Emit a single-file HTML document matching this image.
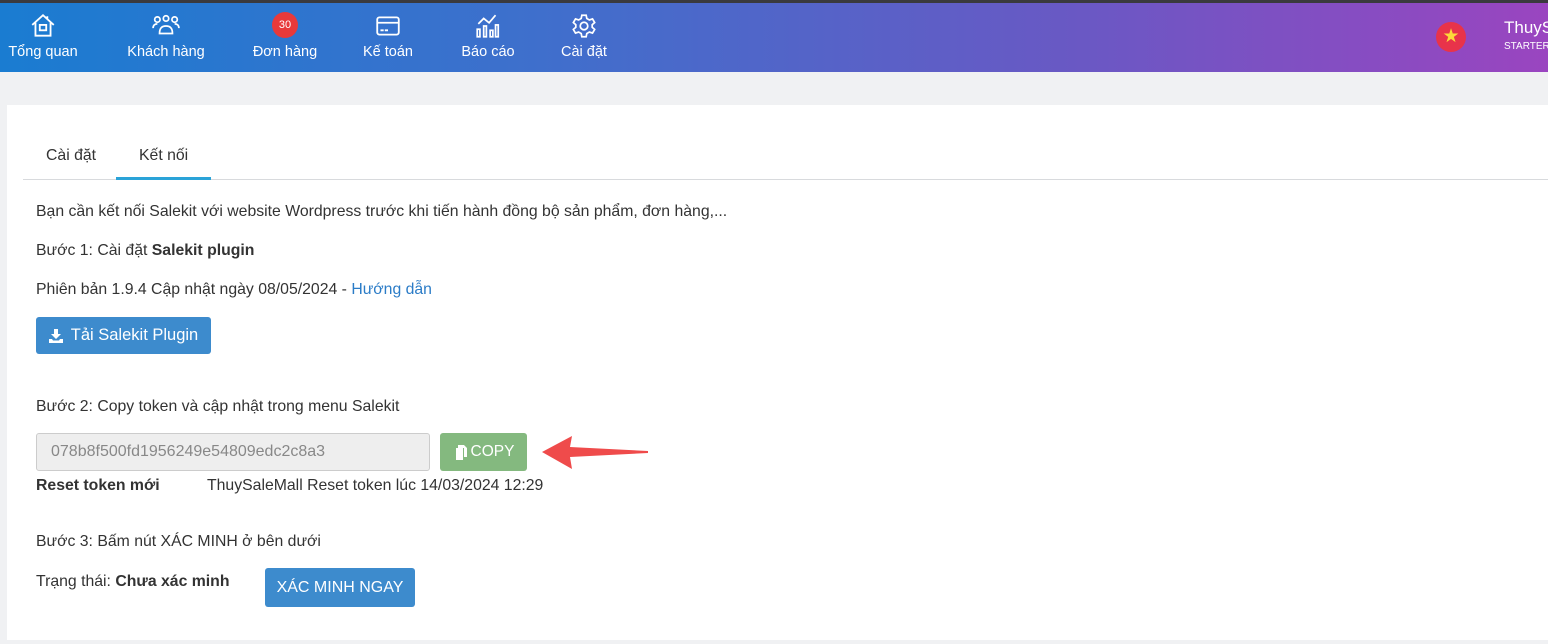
<!DOCTYPE html>
<html><head><meta charset="utf-8"><style>
*{margin:0;padding:0;box-sizing:border-box}
body{width:1548px;height:644px;overflow:hidden;background:#f0f1f3;font-family:"Liberation Sans",sans-serif;color:#333;font-size:15.8px;position:relative}
.top{position:absolute;left:0;top:0;width:1548px;height:3px;background:#3a3a3e}
.hdr{position:absolute;left:0;top:3px;width:1548px;height:69px;background:linear-gradient(90deg,#1a7cd1 0%,#3f6fcc 35%,#6a58c4 70%,#9a45c0 100%);color:#fff}
.nav{position:absolute;top:0;text-align:center;font-size:14.5px;color:#fff}
.nav svg{display:block;margin:9px auto 0;width:28px;height:28px}
.nav span{display:block;margin-top:4px;white-space:nowrap}
.abs{position:absolute;white-space:nowrap}
.card{position:absolute;left:7px;top:105px;width:1541px;height:535px;background:#fff}
.btn{position:absolute;color:#fff;border-radius:3px;font-size:16.5px;display:flex;align-items:center;justify-content:center}
</style></head><body>
<div class="top"></div>
<div class="hdr">
 <div class="nav" style="left:6px;width:74px"><svg viewBox="0 0 26 26" fill="none" stroke="#fff" stroke-width="1.7"><path d="M3 12L13 3l10 9M6 10v12h14V10M17 4v3"/><rect x="10" y="12" width="6" height="5"/></svg><span>Tổng quan</span></div>
 <div class="nav" style="left:124px;width:84px"><svg viewBox="0 0 26 26" fill="none" stroke="#fff" stroke-width="1.6"><circle cx="5" cy="7" r="2.5"/><circle cx="13" cy="6" r="2.5"/><circle cx="21" cy="7" r="2.5"/><path d="M1 15c0-3 2-4 4-4M25 15c0-3-2-4-4-4M7 20c0-5 2-7 6-7s6 2 6 7z"/></svg><span>Khách hàng</span></div>
 <div class="nav" style="left:248px;width:74px"><div style="width:26px;height:26px;border-radius:50%;background:#e8393a;margin:9px auto 0;font-size:11px;line-height:26px">30</div><span style="margin-top:6px">Đơn hàng</span></div>
 <div class="nav" style="left:356px;width:64px"><svg viewBox="0 0 26 26" fill="none" stroke="#fff" stroke-width="1.7"><rect x="3" y="5" width="20" height="16" rx="2"/><path d="M3 10h20M6 17h3M10 17h3"/></svg><span>Kế toán</span></div>
 <div class="nav" style="left:454px;width:68px"><svg viewBox="0 0 26 26" fill="none" stroke="#fff" stroke-width="1.6"><path d="M4 11l5-5 5 4 6-7"/><rect x="3" y="16" width="2.5" height="7"/><rect x="9" y="13" width="2.5" height="10"/><rect x="15" y="17" width="2.5" height="6"/><rect x="20" y="12" width="2.5" height="11"/></svg><span>Báo cáo</span></div>
 <div class="nav" style="left:554px;width:60px"><svg viewBox="0 0 26 26" fill="none" stroke="#fff" stroke-width="1.6"><circle cx="13" cy="13" r="3.5"/><path d="M11 3h4l.6 3 2.4 1.4 2.9-1 2 3.4-2.3 2v2.4l2.3 2-2 3.4-2.9-1-2.4 1.4-.6 3h-4l-.6-3-2.4-1.4-2.9 1-2-3.4 2.3-2v-2.4l-2.3-2 2-3.4 2.9 1L10.4 6z"/></svg><span>Cài đặt</span></div>
 <div style="position:absolute;left:1436px;top:19px;width:30px;height:30px;border-radius:50%;background:#e8334a;color:#fcd93a;font-size:19px;text-align:center;line-height:30px">★</div>
 <div class="abs" style="left:1504px;top:15px;font-size:17px">ThuySaleMall</div>
 <div class="abs" style="left:1504px;top:38px;font-size:10px">STARTER</div>
</div>
<div class="card"></div>
<div class="abs" style="left:46px;top:147px">Cài đặt</div>
<div class="abs" style="left:139px;top:147px">Kết nối</div>
<div style="position:absolute;left:23px;top:179px;width:1525px;height:1px;background:#d8dadd"></div>
<div style="position:absolute;left:116px;top:177px;width:95px;height:3px;background:#2aa3d8"></div>
<div class="abs" style="left:36px;top:203px">Bạn cần kết nối Salekit với website Wordpress trước khi tiến hành đồng bộ sản phẩm, đơn hàng,...</div>
<div class="abs" style="left:36px;top:242px">Bước 1: Cài đặt <b>Salekit plugin</b></div>
<div class="abs" style="left:36px;top:281px">Phiên bản 1.9.4 Cập nhật ngày 08/05/2024 - <span style="color:#2b7cc7">Hướng dẫn</span></div>
<div class="btn" style="left:36px;top:317px;width:175px;height:37px;background:#3d8bcd"><svg width="14" height="14" viewBox="0 0 14 14" style="margin-right:8px"><path d="M5 0h4v5h3L7 10 2 5h3z M0 10h3l1 1.5h6L11 10h3v4H0z" fill="#fff"/></svg>Tải Salekit Plugin</div>
<div class="abs" style="left:36px;top:398px">Bước 2: Copy token và cập nhật trong menu Salekit</div>
<div style="position:absolute;left:36px;top:433px;width:394px;height:38px;background:#eee;border:1px solid #ccc;border-radius:3px;color:#888;font-size:16px;line-height:36px;padding-left:14px">078b8f500fd1956249e54809edc2c8a3</div>
<div class="btn" style="left:440px;top:433px;width:87px;height:38px;background:#84b97f;font-size:15.5px"><svg width="14" height="15" viewBox="0 0 14 15" style="margin-right:4px"><path d="M3 3h7v12H3z M5 0h6l3 3v9h-3V3H5z" fill="#fff"/></svg>COPY</div>
<svg style="position:absolute;left:542px;top:434px" width="108" height="36" viewBox="0 0 108 36"><path d="M0 18L30 2l-2 11 78 4v2l-78 4 2 12z" fill="#ef4b4b"/></svg>
<div class="abs" style="left:36px;top:477px;font-weight:bold">Reset token mới</div>
<div class="abs" style="left:207px;top:477px">ThuySaleMall Reset token lúc 14/03/2024 12:29</div>
<div class="abs" style="left:36px;top:533px">Bước 3: Bấm nút XÁC MINH ở bên dưới</div>
<div class="abs" style="left:36px;top:573px">Trạng thái: <b>Chưa xác minh</b></div>
<div class="btn" style="left:265px;top:568px;width:150px;height:39px;background:#3d8bcd;font-size:16px">XÁC MINH NGAY</div>
</body></html>
